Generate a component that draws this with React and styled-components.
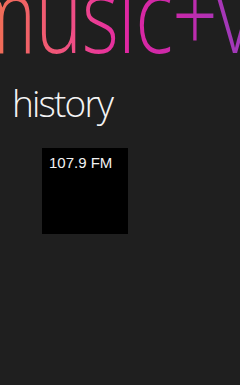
import React from 'react'
import styled, { createGlobalStyle } from 'styled-components'

const Global = createGlobalStyle`
  html, body {
    margin: 0;
    padding: 0;
    background: #1f1f1f;
  }
`

const Screen = styled.div`
  width: 240px;
  height: 385px;
  box-sizing: border-box;
  background: #1f1f1f;
  overflow: hidden;
  display: flex;
  flex-direction: column;
  font-family: 'Open Sans', 'Liberation Sans', sans-serif;
  color: #fff;
`

// panorama title, squeezed to the narrow Segoe look
const Title = styled.h1`
  align-self: flex-start;
  width: max-content;
  margin: -41px 0 0 -34px;
  height: 106px;
  font-weight: 300;
  font-size: 106px;
  line-height: 106px;
  white-space: nowrap;
  letter-spacing: -1px;
  transform: scaleX(0.75);
  transform-origin: left center;
  background: linear-gradient(
    90deg,
    #f06c58 45px,
    #f05a72 107px,
    #ee4a8a 152px,
    #e8359a 184px,
    #de27a2 216px,
    #c42aac 293px,
    #a238b8 349px
  );
  -webkit-background-clip: text;
  background-clip: text;
  color: transparent;
`

const Section = styled.section`
  display: flex;
  flex-direction: column;
  padding: 0 0 0 12px;
`

const Header = styled.h2`
  margin: 16px 0 0 0;
  font-weight: 300;
  font-size: 37px;
  line-height: 44px;
  letter-spacing: -1.8px;
  color: #f4f4f4;
`

const Tiles = styled.div`
  display: flex;
  padding: 23px 0 0 30px;
`

const Tile = styled.div`
  width: 86px;
  height: 86px;
  background: #000;
  box-sizing: border-box;
  padding: 6px 0 0 7px;
  font-family: 'Liberation Sans', Arial, sans-serif;
  font-size: 15px;
  color: #f2f2f2;
`

export default function App() {
  return (
    <>
      <Global />
      <Screen>
        <Title>music+videos</Title>
        <Section>
          <Header>history</Header>
          <Tiles>
            <Tile>107.9 FM</Tile>
          </Tiles>
        </Section>
      </Screen>
    </>
  )
}
